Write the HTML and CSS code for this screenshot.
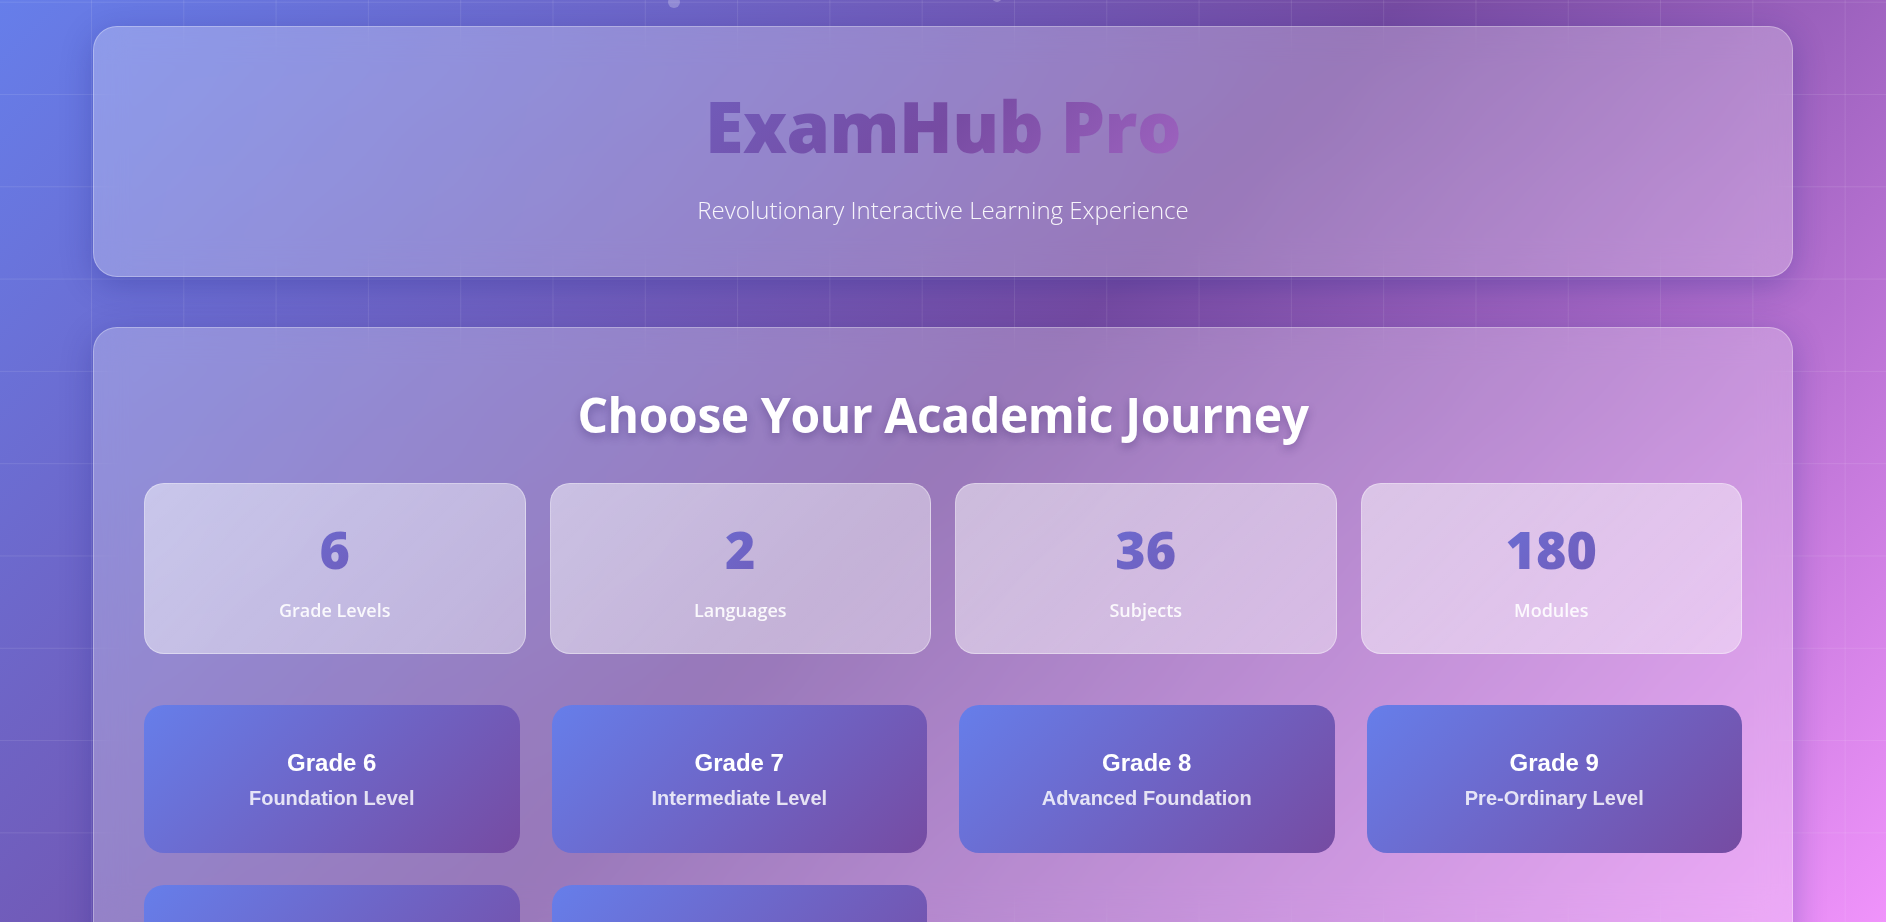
FILE: index.html
```html
<!DOCTYPE html>
<html lang="en">
<head>
<meta charset="utf-8">
<title>ExamHub Pro</title>
<link rel="stylesheet" href="styles.css">
</head>
<body>
<div class="grid-bg"></div>
<span class="particle p1"></span>
<span class="particle p2"></span>
<main class="container">
  <header class="hero glass">
    <h1 class="brand">ExamHub Pro</h1>
    <p class="tagline">Revolutionary Interactive Learning Experience</p>
  </header>

  <section class="journey glass">
    <h2 class="journey-title">Choose Your Academic Journey</h2>

    <div class="stats">
      <div class="stat">
        <div class="stat-num">6</div>
        <div class="stat-label">Grade Levels</div>
      </div>
      <div class="stat">
        <div class="stat-num">2</div>
        <div class="stat-label">Languages</div>
      </div>
      <div class="stat">
        <div class="stat-num">36</div>
        <div class="stat-label">Subjects</div>
      </div>
      <div class="stat">
        <div class="stat-num">180</div>
        <div class="stat-label">Modules</div>
      </div>
    </div>

    <div class="grades">
      <div class="grade">
        <div class="grade-name">Grade 6</div>
        <div class="grade-desc">Foundation Level</div>
      </div>
      <div class="grade">
        <div class="grade-name">Grade 7</div>
        <div class="grade-desc">Intermediate Level</div>
      </div>
      <div class="grade">
        <div class="grade-name">Grade 8</div>
        <div class="grade-desc">Advanced Foundation</div>
      </div>
      <div class="grade">
        <div class="grade-name">Grade 9</div>
        <div class="grade-desc">Pre-Ordinary Level</div>
      </div>
      <div class="grade">
        <div class="grade-name">Grade 10</div>
        <div class="grade-desc">Ordinary Level Prep</div>
      </div>
      <div class="grade">
        <div class="grade-name">Grade 11</div>
        <div class="grade-desc">O/L Examination</div>
      </div>
    </div>
  </section>
</main>
</body>
</html>
```

FILE: styles.css
```css
* {
  box-sizing: border-box;
}

html, body {
  margin: 0;
  padding: 0;
}

body {
  min-height: 100vh;
  font-family: "Open Sans", "Noto Sans", sans-serif;
  color: #fff;
  background: linear-gradient(135deg, #667eea 0%, #764ba2 50%, #f093fb 100%);
  background-attachment: fixed;
  overflow-x: hidden;
}

.grid-bg {
  position: fixed;
  inset: 0;
  pointer-events: none;
  background-image:
    linear-gradient(rgba(255, 255, 255, 0.1) 1px, transparent 1px),
    linear-gradient(90deg, rgba(255, 255, 255, 0.1) 1px, transparent 1px);
  background-size: 92.3px 92.3px;
  background-position: -1.3px 1.7px;
  z-index: 0;
}

.particle {
  position: fixed;
  width: 12px;
  height: 12px;
  border-radius: 50%;
  background: rgba(255, 255, 255, 0.25);
  z-index: 0;
}

.p1 { left: 668px; top: -4px; }
.p2 { left: 992px; top: -8px; width: 10px; height: 10px; }

.container {
  position: relative;
  z-index: 1;
  max-width: 1700px;
  margin: 0 auto;
  padding: 26px 0 40px;
}

.glass {
  background: rgba(255, 255, 255, 0.25);
  border: 1px solid rgba(255, 255, 255, 0.3);
  border-radius: 24px;
  backdrop-filter: blur(16px);
  -webkit-backdrop-filter: blur(16px);
  box-shadow: 0 8px 32px rgba(31, 38, 135, 0.3);
}

.hero {
  height: 251px;
  padding: 58px 50px 0;
  text-align: center;
}

.brand {
  margin: 0;
  font-size: 70px;
  font-weight: 800;
  line-height: 82px;
  letter-spacing: -0.5px;
  background: linear-gradient(135deg, #667eea 0%, #764ba2 50%, #f093fb 100%);
  -webkit-background-clip: text;
  background-clip: text;
  color: transparent;
}

.tagline {
  margin: 28px 0 0;
  font-size: 24px;
  font-weight: 300;
  line-height: 30px;
  letter-spacing: 0;
  color: rgba(255, 255, 255, 0.92);
}

.journey {
  margin-top: 50px;
  padding: 58px 50px 60px;
}

.journey-title {
  margin: 0 0 39px;
  text-align: center;
  font-size: 48px;
  font-weight: 700;
  line-height: 58px;
  letter-spacing: -0.4px;
  color: #fff;
  text-shadow: 0 4px 10px rgba(40, 20, 90, 0.3);
}

.stats {
  display: grid;
  grid-template-columns: repeat(4, 1fr);
  gap: 24px;
}

.stat {
  height: 171px;
  padding-top: 35px;
  text-align: center;
  background: linear-gradient(135deg, rgba(255, 255, 255, 0.5), rgba(255, 255, 255, 0.4));
  border: 1px solid rgba(255, 255, 255, 0.35);
  border-radius: 20px;
}

.stat-num {
  font-size: 52px;
  font-weight: 800;
  line-height: 60px;
  background: linear-gradient(135deg, #667eea 0%, #764ba2 100%);
  -webkit-background-clip: text;
  background-clip: text;
  color: transparent;
}

.stat-label {
  margin-top: 19px;
  font-size: 18px;
  font-weight: 600;
  line-height: 24px;
  color: rgba(255, 255, 255, 0.9);
}

.grades {
  margin-top: 51px;
  display: grid;
  grid-template-columns: repeat(4, 1fr);
  gap: 32px;
}

.grade {
  padding: 44px 20px 43px;
  text-align: center;
  border-radius: 20px;
  background: linear-gradient(135deg, #667eea 0%, #764ba2 100%);
  font-family: "Liberation Sans", Arial, sans-serif;
  font-weight: 700;
}

.grade-name {
  font-size: 24px;
  line-height: 28px;
  color: #fff;
}

.grade-desc {
  margin-top: 10px;
  font-size: 20px;
  line-height: 23px;
  color: rgba(255, 255, 255, 0.82);
}
```
